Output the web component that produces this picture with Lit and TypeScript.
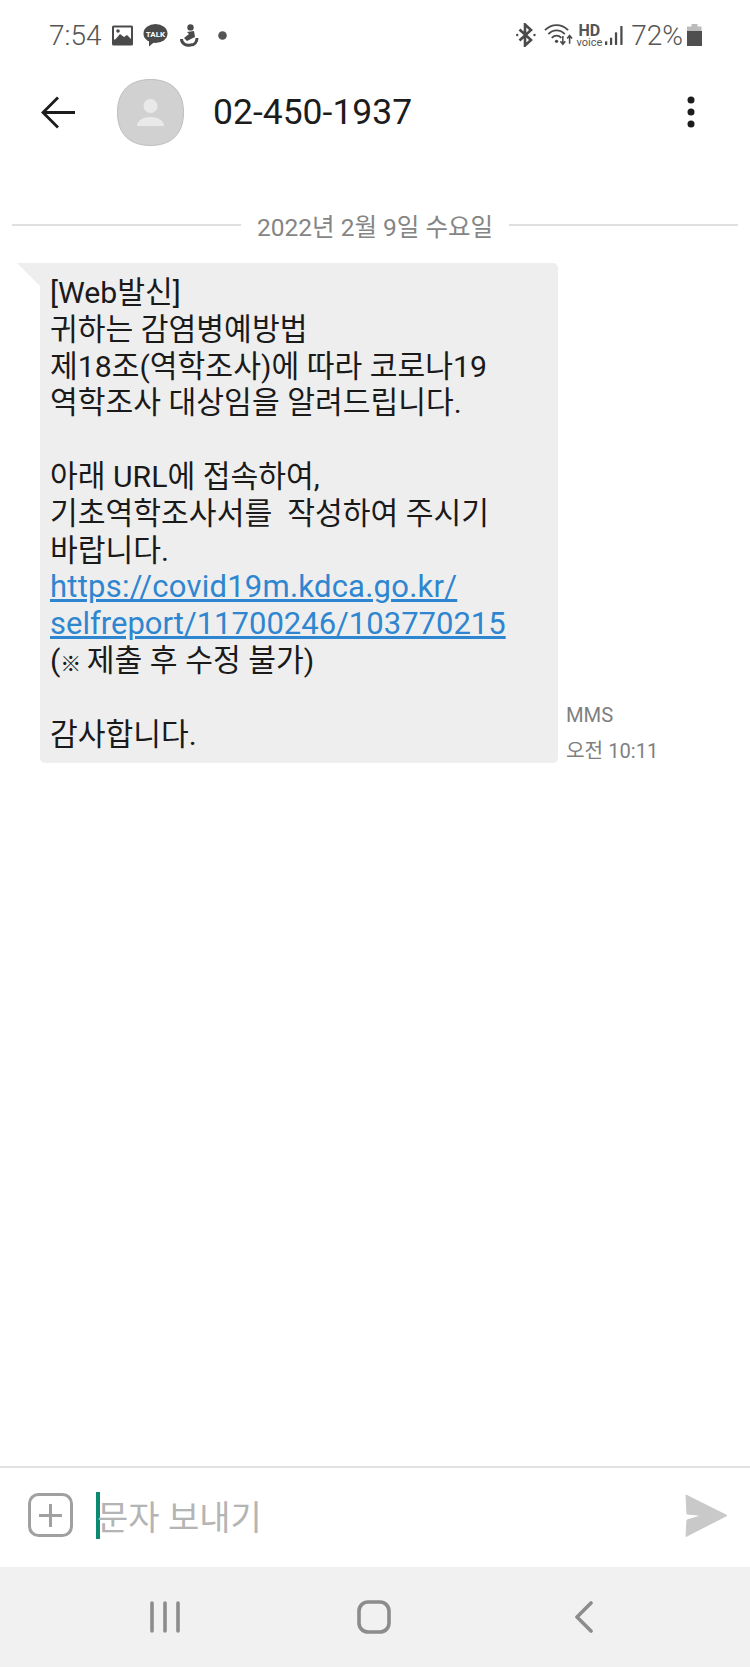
import { LitElement, html, css } from 'lit';
import { customElement } from 'lit/decorators.js';

const LINES = [
  html`[Web발신]`,
  html`귀하는 감염병예방법`,
  html`제18조(역학조사)에 따라 코로나19`,
  html`역학조사 대상임을 알려드립니다.`,
  html`&nbsp;`,
  html`아래 URL에 접속하여,`,
  html`기초역학조사서를  작성하여 주시기`,
  html`바랍니다.`,
  html`<a class="wide">https://covid19m.kdca.go.kr/</a>`,
  html`<a>selfreport/11700246/103770215</a>`,
  html`(<span class="mark">※</span> 제출 후 수정 불가)`,
  html`&nbsp;`,
  html`감사합니다.`
];

@customElement('app-root')
export class AppRoot extends LitElement {
  static styles = css`
    :host {
      display: block;
      width: 750px;
      height: 1667px;
      background: #fff;
      font-family: Roboto, 'Noto Sans CJK KR', sans-serif;
      overflow: hidden;
    }
    .screen {
      height: 1667px;
      display: flex;
      flex-direction: column;
    }

    /* status bar */
    .status {
      height: 70px;
      box-sizing: border-box;
      padding: 14px 48px 0 49px;
      display: flex;
      align-items: flex-start;
      justify-content: space-between;
      color: #555;
    }
    .status-side {
      height: 42px;
      display: flex;
      align-items: center;
    }
    .clock {
      font-size: 28px;
      font-weight: 300;
      margin-right: 11px;
    }
    .pct {
      font-size: 28px;
      font-weight: 300;
      margin: 0 4px 0 8px;
    }
    .hd {
      display: flex;
      flex-direction: column;
      align-items: center;
      font-weight: 700;
      font-size: 16px;
      line-height: 14px;
      margin: 0 3px 0 3px;
    }
    .hd span {
      font-weight: 400;
      font-size: 11px;
      line-height: 9px;
    }
    .ic-pic {
      margin-right: 9px;
    }
    .ic-talk {
      margin-right: 11px;
    }
    .ic-talk text {
      font-size: 8px;
      font-weight: 700;
      fill: #fff;
    }
    .ic-fig {
      margin-right: 19px;
    }
    .ic-bt {
      margin-right: 8px;
    }

    /* header */
    .header {
      height: 84px;
      display: flex;
      align-items: center;
      padding: 0 0 0 41px;
    }
    .back {
      margin-right: 41px;
    }
    .avatar {
      width: 67px;
      height: 67px;
      margin-right: 29px;
    }
    .title {
      font-size: 35.5px;
      color: #1c1c1c;
      flex: 1;
    }
    .more {
      margin-right: 53px;
    }

    /* conversation */
    .thread {
      flex: 1;
    }
    .date {
      display: flex;
      align-items: center;
      margin: 49px 12px 0;
      height: 44px;
      color: #858585;
      font-size: 24.5px;
    }
    .date i {
      flex: 1;
      height: 2px;
      background: #e0e0e0;
    }
    .date span {
      margin: 0 16px;
    }
    .msg {
      display: flex;
      align-items: flex-end;
      margin: 16px 0 0 17px;
    }
    .tail {
      width: 0;
      height: 0;
      align-self: flex-start;
      border-top: 23px solid #eeeeee;
      border-left: 23px solid transparent;
    }
    .bubble {
      width: 518px;
      height: 500px;
      box-sizing: border-box;
      padding: 12px 10px 0;
      background: #eeeeee;
      border-radius: 0 5px 5px 5px;
      color: #1a1a1a;
      font-size: 30.2px;
    }
    .line {
      height: 36.8px;
      line-height: 36.8px;
      white-space: pre;
    }
    .bubble a {
      color: #2f86d0;
      font-size: 31px;
      text-decoration: underline;
    }
    .bubble a.wide {
      letter-spacing: 0.23px;
    }
    .mark {
      font-size: 21px;
      font-weight: 700;
      margin-right: -2px;
    }
    .meta {
      margin: 0 0 -6px 8px;
      color: #7f7f7f;
      font-size: 20.2px;
      line-height: 36px;
    }

    /* composer */
    .composer {
      height: 101px;
      box-sizing: border-box;
      border-top: 2px solid #e2e2e2;
      display: flex;
      align-items: center;
      padding: 0 0 4px 28px;
    }
    .plus {
      width: 46px;
      height: 46px;
      margin-right: 22px;
    }
    .cursor {
      width: 4px;
      height: 47px;
      background: #0b8a72;
    }
    .hint {
      flex: 1;
      font-size: 34px;
      color: #b4b4b4;
      margin-left: -3px;
    }
    .send {
      width: 44px;
      height: 44px;
      margin-right: 22px;
    }

    /* nav bar */
    .nav {
      height: 100px;
      background: #f1f1f1;
      display: grid;
      grid-template-columns: 329px 90px 329px;
      align-items: center;
      justify-items: center;
    }
    svg {
      display: block;
    }
  `;

  render() {
    return html`
      <div class="screen">
        <div class="status">
          <div class="status-side">
            <span class="clock">7:54</span>
            <svg class="ic-pic" width="22" height="21" viewBox="0 0 22 21">
              <rect width="21" height="20" y="0.5" rx="1.5" fill="#4a4a4a" />
              <rect x="2" y="2.5" width="17" height="12" fill="#fff" />
              <circle cx="6" cy="6" r="1.8" fill="#4a4a4a" />
              <path d="M2 16 8 9l4 3 3-2 4 4v3H2z" fill="#4a4a4a" />
            </svg>
            <svg class="ic-talk" width="25" height="23" viewBox="0 0 25 23">
              <ellipse cx="12.5" cy="9.5" rx="12" ry="9.5" fill="#4a4a4a" />
              <path d="M6 16v6.5l6-5z" fill="#4a4a4a" />
              <text x="12.5" y="12.5" text-anchor="middle">TALK</text>
            </svg>
            <svg class="ic-fig" width="20" height="23" viewBox="0 0 20 23">
              <circle cx="11.5" cy="3.4" r="3.2" fill="#4a4a4a" />
              <path d="M8 8l7-1 1 6-8 4-3-3 5-4z" fill="#4a4a4a" />
              <path d="M2.500 15c0 5 5 7 9 6 4 0 6.500-3 6.500-7" fill="none" stroke="#4a4a4a" stroke-width="3" />
            </svg>
            <svg width="9" height="9" viewBox="0 0 9 9"><circle cx="4.5" cy="4.5" r="4.3" fill="#555" /></svg>
          </div>
          <div class="status-side">
            <svg class="ic-bt" width="20" height="24" viewBox="0 0 20 24">
              <path d="M3.5 6.5 15 17l-6 5.5v-21L15 7 3.5 17.500" fill="none" stroke="#4a4a4a" stroke-width="2.6" />
              <circle cx="1.2" cy="12" r="1.2" fill="#4a4a4a" />
              <circle cx="18.5" cy="12" r="1.2" fill="#4a4a4a" />
            </svg>
            <svg width="29" height="22" viewBox="0 0 30 22">
              <path d="M1 6c7-7 17-7 24 0M4.500 10c5-5 12-5 17 0M8 14c3-3 7-3 10 0" fill="none" stroke="#4a4a4a" stroke-width="1.8" />
              <circle cx="13" cy="17.500" r="1.7" fill="#4a4a4a" />
              <path d="M19.500 12v8M17 17.500l2.500 3 2.500-3M26.500 20v-8M24 14.500l2.500-3 2.500 3" fill="none" stroke="#4a4a4a" stroke-width="1.6" />
            </svg>
            <div class="hd">HD<span>voice</span></div>
            <svg width="18" height="21" viewBox="0 0 20 21">
              <rect x="0" y="17" width="2.500" height="4" fill="#4a4a4a" />
              <rect x="5.500" y="13" width="2.500" height="8" fill="#4a4a4a" />
              <rect x="11" y="7" width="2.500" height="14" fill="#4a4a4a" />
              <rect x="17" y="0" width="2.500" height="21" fill="#4a4a4a" />
            </svg>
            <span class="pct">72%</span>
            <svg width="15" height="22" viewBox="0 0 15 22">
              <path d="M4.500 0h6v2.500h4V22H0V2.500h4.500z" fill="#bbb" />
              <rect y="7" width="15" height="15" fill="#4f4f4f" />
            </svg>
          </div>
        </div>

        <div class="header">
          <svg class="back" width="35" height="33" viewBox="0 0 35 33">
            <path d="M34 16.500H2.500M17 1.500 2 16.500l15 15" fill="none" stroke="#1c1c1c" stroke-width="2.800" />
          </svg>
          <svg class="avatar" viewBox="0 0 67 67">
            <path d="M33.500 .5C52 .5 66.500 10 66.500 33.500S52 66.500 33.500 66.500.5 57 .5 33.500 15 .5 33.500 .5z" fill="#d1d1d1" stroke="#bdbdbd" />
            <circle cx="33.500" cy="27" r="7" fill="#e9e9e9" />
            <path d="M20 47c0-6 7-9 13.500-9S47 41 47 47z" fill="#e9e9e9" />
          </svg>
          <div class="title">02-450-1937</div>
          <svg class="more" width="12" height="32" viewBox="0 0 12 32">
            <circle cx="6" cy="4" r="3.500" fill="#1c1c1c" />
            <circle cx="6" cy="16" r="3.500" fill="#1c1c1c" />
            <circle cx="6" cy="28" r="3.500" fill="#1c1c1c" />
          </svg>
        </div>

        <div class="thread">
          <div class="date"><i></i><span>2022년 2월 9일 수요일</span><i></i></div>
          <div class="msg">
            <div class="tail"></div>
            <div class="bubble">${LINES.map((l) => html`<div class="line">${l}</div>`)}</div>
            <div class="meta">MMS<br />오전 10:11</div>
          </div>
        </div>

        <div class="composer">
          <svg class="plus" viewBox="0 0 46 46">
            <rect x="1.500" y="1.500" width="42" height="41" rx="9" fill="none" stroke="#a0a0a0" stroke-width="3" />
            <path d="M22.500 11v23M11 22.500h23" stroke="#a0a0a0" stroke-width="3" />
          </svg>
          <div class="cursor"></div>
          <div class="hint">문자 보내기</div>
          <svg class="send" viewBox="0 0 44 44">
            <path d="M2 1 43 21.500 2 42.500 3 26 18 21.500 3 20z" fill="#c9c9c9" stroke="#c9c9c9" stroke-linejoin="round" />
          </svg>
        </div>

        <div class="nav">
          <svg width="30" height="32" viewBox="0 0 30 32">
            <path d="M2 2v28M15 2v28M28 2v28" stroke="#8c8c8c" stroke-width="3.600" stroke-linecap="round" />
          </svg>
          <svg width="34" height="34" viewBox="0 0 34 34">
            <rect x="2" y="2" width="30" height="30" rx="9" fill="none" stroke="#8c8c8c" stroke-width="3.600" />
          </svg>
          <svg width="20" height="32" viewBox="0 0 20 32">
            <path d="M17 2 3 16l14 14" fill="none" stroke="#8c8c8c" stroke-width="3.600" stroke-linecap="round" stroke-linejoin="round" />
          </svg>
        </div>
      </div>
    `;
  }
}
